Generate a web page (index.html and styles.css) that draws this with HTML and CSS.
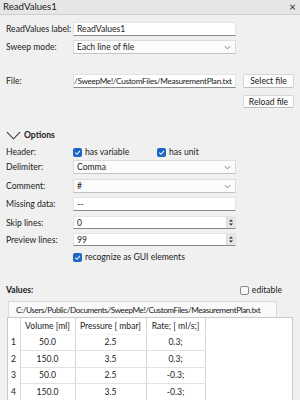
FILE: index.html
```html
<!DOCTYPE html>
<html>
<head>
<meta charset="utf-8">
<link rel="stylesheet" href="styles.css">
</head>
<body>
<div class="titlebar">
  <span class="title">ReadValues1</span>
  <span class="close">×</span>
</div>
<div class="form">
  <div class="row r1">
    <span class="label">ReadValues label:</span>
    <div class="field input">ReadValues1</div>
  </div>
  <div class="row r2">
    <span class="label">Sweep mode:</span>
    <div class="field combo">Each line of file<svg class="chev" viewBox="0 0 8 5"><path d="M1 1 L4 4 L7 1" /></svg></div>
  </div>
  <div class="row r3">
    <span class="label">File:</span>
    <div class="field input file">/SweepMe!/CustomFiles/MeasurementPlan.txt</div>
    <div class="btn">Select file</div>
  </div>
  <div class="row r4">
    <span class="label"></span>
    <span class="spacer"></span>
    <div class="btn">Reload file</div>
  </div>

  <div class="options">
    <svg class="bigchev" viewBox="0 0 16 9"><path d="M1 1 L8 8 L15 1" /></svg>
    <span class="bold">Options</span>
  </div>

  <div class="row r6">
    <span class="label">Header:</span>
    <div class="checks">
      <span class="check on"><svg viewBox="0 0 8 8"><path d="M2 4.2 L3.5 5.6 L6.2 2.6"/></svg></span><span class="ctext w1">has variable</span>
      <span class="check on"><svg viewBox="0 0 8 8"><path d="M2 4.2 L3.5 5.6 L6.2 2.6"/></svg></span><span class="ctext">has unit</span>
    </div>
  </div>
  <div class="row r7">
    <span class="label">Delimiter:</span>
    <div class="field combo">Comma<svg class="chev" viewBox="0 0 8 5"><path d="M1 1 L4 4 L7 1" /></svg></div>
  </div>
  <div class="row r8">
    <span class="label">Comment:</span>
    <div class="field combo">#<svg class="chev" viewBox="0 0 8 5"><path d="M1 1 L4 4 L7 1" /></svg></div>
  </div>
  <div class="row r9">
    <span class="label">Missing data:</span>
    <div class="field input">--</div>
  </div>
  <div class="row r10">
    <span class="label">Skip lines:</span>
    <div class="field input spin">0<span class="arrows"><svg viewBox="0 0 8 10"><path d="M2 4 L4 2 L6 4 Z M2 6 L4 8 L6 6 Z"/></svg></span></div>
  </div>
  <div class="row r11">
    <span class="label">Preview lines:</span>
    <div class="field input spin">99<span class="arrows"><svg viewBox="0 0 8 10"><path d="M2 4 L4 2 L6 4 Z M2 6 L4 8 L6 6 Z"/></svg></span></div>
  </div>
  <div class="row r12">
    <span class="label"></span>
    <div class="checks">
      <span class="check on"><svg viewBox="0 0 8 8"><path d="M2 4.2 L3.5 5.6 L6.2 2.6"/></svg></span><span class="ctext">recognize as GUI elements</span>
    </div>
  </div>

  <div class="values">
    <span class="bold">Values:</span>
    <div class="editable"><span class="check off"></span><span class="ctext">editable</span></div>
  </div>
</div>

<div class="tabs">
  <div class="tab">C:/Users/Public/Documents/SweepMe!/CustomFiles/MeasurementPlan.txt</div>
</div>
<div class="panel">
  <table class="grid">
    <colgroup><col class="c0"><col class="c1"><col class="c2"><col class="c3"><col></colgroup>
    <tr class="head"><th></th><th>Volume [ml]</th><th>Pressure [ mbar]</th><th>Rate; [ ml/s;]</th><th class="empty"></th></tr>
    <tr><td class="num">1</td><td>50.0</td><td>2.5</td><td>0.3;</td><td class="empty"></td></tr>
    <tr><td class="num">2</td><td>150.0</td><td>3.5</td><td>0.3;</td><td class="empty"></td></tr>
    <tr><td class="num">3</td><td>50.0</td><td>2.5</td><td>-0.3;</td><td class="empty"></td></tr>
    <tr><td class="num">4</td><td>150.0</td><td>3.5</td><td>-0.3;</td><td class="empty"></td></tr>
  </table>
</div>
</body>
</html>
```

FILE: styles.css
```css
* { box-sizing: border-box; }
html, body { margin: 0; padding: 0; }
body {
  width: 300px;
  height: 400px;
  overflow: hidden;
  background: #f0f0f0;
  font-family: Lato, "Noto Sans", sans-serif;
  font-size: 8.6px;
  color: #1b1b1b;
}
.titlebar {
  height: 15px;
  background: #e6e6e6;
  border-bottom: 1px solid #cfcfcf;
  display: flex;
  align-items: center;
  justify-content: space-between;
  padding: 0 4px 0 3px;
}
.title { font-size: 9.6px; line-height: 14px; }
.close { font-size: 12px; line-height: 14px; color: #333; }
.form { padding: 0 6px; }
.row {
  display: flex;
  align-items: center;
  height: 14px;
}
.label { width: 67px; flex: none; white-space: nowrap; }
.spacer { width: 163px; flex: none; }
.field {
  width: 163px;
  height: 14px;
  flex: none;
  background: #fff;
  border: 1px solid #e4e4e4;
  border-bottom-color: #8a8a8a;
  border-radius: 1px;
  padding: 0 3px;
  display: flex;
  align-items: center;
  white-space: nowrap;
  overflow: hidden;
  position: relative;
}
.file {
  padding-left: 0;
  font-size: 8.2px;
  letter-spacing: -0.3px;
}
.combo {
  background: #fbfbfb;
  border-color: #dcdcdc;
  border-bottom-color: #c4c4c4;
}
.chev {
  position: absolute;
  right: 4px;
  top: 4px;
  width: 7px;
  height: 5px;
  fill: none;
  stroke: #6a6a6a;
  stroke-width: 1;
}
.spin .arrows {
  position: absolute;
  right: 0;
  top: 0;
  width: 9px;
  height: 11px;
  background: #e6e6e6;
  border-left: 1px solid #d8d8d8;
  display: flex;
}
.arrows svg { width: 9px; height: 11px; fill: #222; }
.btn {
  margin-left: 7px;
  width: 51px;
  height: 14px;
  background: #fdfdfd;
  border: 1px solid #d6d6d6;
  border-bottom-color: #bdbdbd;
  border-radius: 2px;
  display: flex;
  align-items: center;
  justify-content: center;
  white-space: nowrap;
}
.r1 { margin-top: 7px; }
.r2 { margin-top: 4px; }
.r3 { margin-top: 20px; }
.r4 { margin-top: 7px; height: 13px; }
.r4 .btn { height: 13px; }
.options {
  display: flex;
  align-items: center;
  height: 14px;
  margin-top: 20px;
}
.bigchev {
  width: 15px;
  height: 9px;
  fill: none;
  stroke: #333;
  stroke-width: 1.1;
  margin-right: 3px;
}
.bold { font-weight: bold; }
.r6 { margin-top: 3px; }
.r7 { margin-top: 1px; }
.r8 { margin-top: 5px; }
.r9 { margin-top: 4px; }
.r10 { margin-top: 5px; height: 13px; }
.r10 .field { height: 13px; }
.r11 { margin-top: 4px; height: 13px; }
.r11 .field { height: 13px; }
.r12 { margin-top: 6px; height: 10px; }
.checks { display: flex; align-items: center; }
.check {
  width: 9px;
  height: 9px;
  border-radius: 2px;
  flex: none;
  display: inline-flex;
}
.check.on { background: #1a66c2; }
.check.on svg { width: 9px; height: 9px; fill: none; stroke: #fff; stroke-width: 0.9; }
.check.off { border: 1px solid #8a8a8a; background: #f7f7f7; }
.ctext { margin-left: 3px; white-space: nowrap; }
.ctext.w1 { width: 72px; }
.values {
  display: flex;
  align-items: center;
  justify-content: space-between;
  margin-top: 21px;
  height: 14px;
  padding-right: 12px;
}
.editable { display: flex; align-items: center; }
.tabs {
  margin-top: 4px;
  padding-left: 8px;
  height: 16px;
  display: flex;
}
.tab {
  width: 269px;
  height: 16px;
  background: #f9f9f9;
  border: 1px solid #dadada;
  border-bottom: none;
  padding-left: 7px;
  display: flex;
  align-items: center;
  white-space: nowrap;
  overflow: hidden;
  font-size: 8.2px;
  letter-spacing: -0.42px;
}
.panel {
  margin-left: 7px;
  width: 286px;
  height: 90px;
  background: #fff;
  border: 1px solid #c9c9c9;
  overflow: hidden;
}
.grid {
  border-collapse: collapse;
  table-layout: fixed;
  width: 100%;
}
.c0 { width: 12px; }
.c1 { width: 55px; }
.c2 { width: 71px; }
.c3 { width: 59px; }
.grid th, .grid td {
  height: 16px;
  padding: 0;
  text-align: center;
  font-weight: normal;
  white-space: nowrap;
  border-right: 1px solid #d6d6d6;
  border-bottom: 1px solid #e2e2e2;
}
.grid tr.head th { height: 16px; border-bottom-color: #f4f4f4; }
.grid td.num, .grid th:first-child { text-align: left; padding-left: 3px; border-bottom: none; }
.grid .empty { border: none; }
.grid tr td { height: 16.5px; }
```
